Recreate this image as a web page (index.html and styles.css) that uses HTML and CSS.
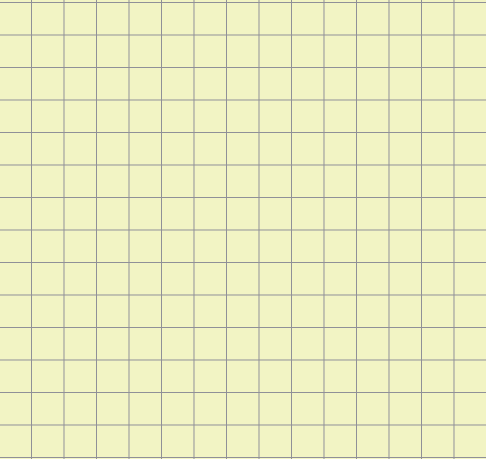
FILE: index.html
```html
<!DOCTYPE html>
<html lang="en">
<head>
  <meta charset="UTF-8">
  <title>Grid Paper</title>
  <link rel="stylesheet" href="styles.css">
</head>
<body>
  <div class="board"></div>
</body>
</html>
```

FILE: styles.css
```css
html, body {
  margin: 0;
  height: 100%;
  overflow: hidden;
}
.board {
  height: 100%;
  background-color: #f2f4c4;
  background-image:
    linear-gradient(to right, #8f8f98 1px, transparent 1px),
    linear-gradient(to bottom, #8f8f98 1px, transparent 1px);
  background-size: 32.5px 32.5px;
  background-position: -1.5px 2px;
}
```
